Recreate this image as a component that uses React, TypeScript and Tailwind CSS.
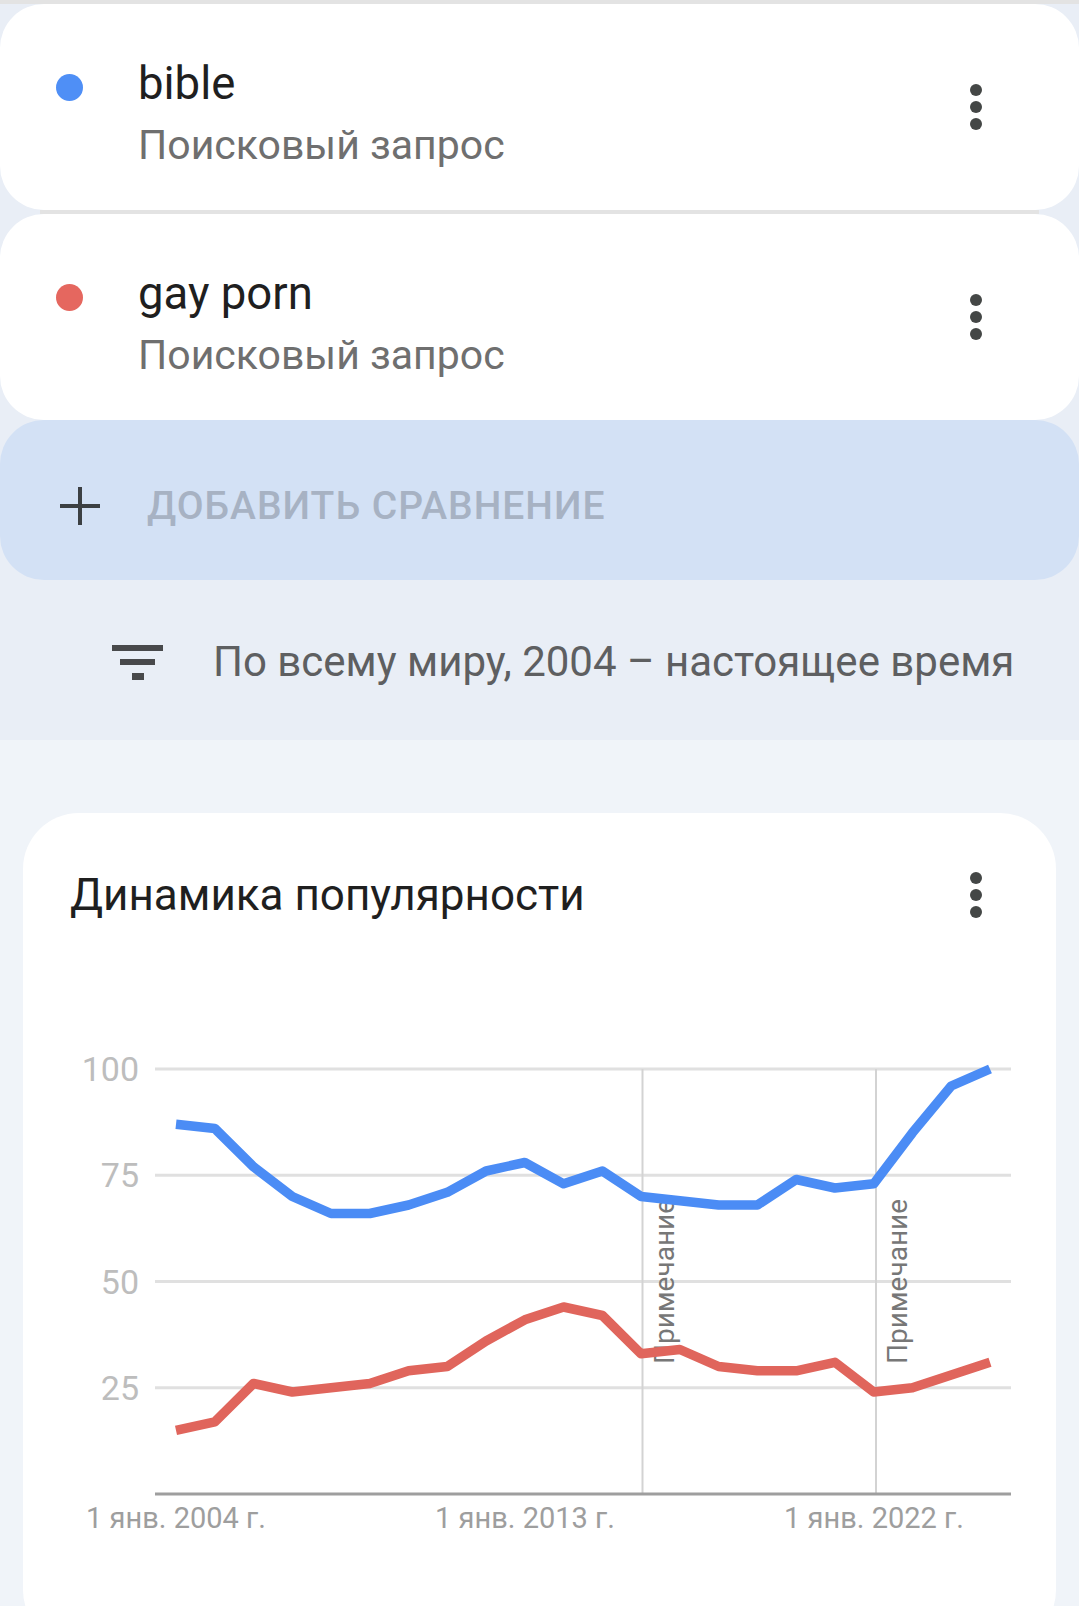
import React from "react";

const blue = [87, 86, 77, 70, 66, 66, 68, 71, 76, 78, 73, 76, 70, 69, 68, 68, 74, 72, 73, 85, 96, 100];
const red = [15, 17, 26, 24, 25, 26, 29, 30, 36, 41, 44, 42, 33, 34, 30, 29, 29, 31, 24, 25, 28, 31];

// chart geometry, in page pixels
const X0 = 176;
const STEP = 38.76;
const BASE = 1494;
const UNIT = 4.25;

const toPoints = (data: number[]) =>
  data.map((v, i) => `${(X0 + i * STEP).toFixed(1)},${(BASE - v * UNIT).toFixed(1)}`).join(" ");

function Kebab() {
  return (
    <div className="flex flex-col items-center gap-[5px]">
      <span className="h-3 w-3 rounded-full bg-[#444746]" />
      <span className="h-3 w-3 rounded-full bg-[#444746]" />
      <span className="h-3 w-3 rounded-full bg-[#444746]" />
    </div>
  );
}

function TermCard({ dot, title }: { dot: string; title: string }) {
  return (
    <div className="flex h-[206px] items-start rounded-[44px] bg-white pl-14 pr-[97px] pt-[54px]">
      <span className={`mt-4 h-[27px] w-[27px] shrink-0 rounded-full ${dot}`} />
      <div className="ml-[55px] flex-1">
        <div className="text-[45.5px] leading-[52px] text-[#1f1f1f]">{title}</div>
        <div className="mt-[11px] text-[41px] leading-[48px] text-[#6f6f6f]">Поисковый запрос</div>
      </div>
      <div className="mt-[26px]">
        <Kebab />
      </div>
    </div>
  );
}

export default function App() {
  const grid = [100, 75, 50, 25];
  const notes = [642.5, 876];

  return (
    <div className="h-[1606px] overflow-hidden bg-[#f0f4f9] font-['Roboto',sans-serif]">
      <div className="bg-[#e9eef6]">
        <div className="h-1 bg-[#e3e3e3]" />
        <TermCard dot="bg-[#4f8ff6]" title="bible" />
        <div className="mx-10 h-1 bg-[#e3e3e3]" />
        <TermCard dot="bg-[#e5675f]" title="gay porn" />

        {/* add comparison */}
        <div className="flex h-[160px] items-center rounded-[44px] bg-[#d3e1f5] pl-[60px] pt-3">
          <svg width="40" height="40" viewBox="0 0 40 40" className="shrink-0">
            <line x1="0" y1="20" x2="40" y2="20" stroke="#3c4043" strokeWidth="4" />
            <line x1="20" y1="1" x2="20" y2="39" stroke="#3c4043" strokeWidth="4" />
          </svg>
          <span className="ml-[47px] text-[39px] font-medium uppercase leading-none tracking-[1px] text-[#a7b2c3]">
            Добавить сравнение
          </span>
        </div>

        {/* filter row */}
        <div className="flex h-[160px] items-center pl-[112px] pt-1">
          <div className="flex w-[51px] shrink-0 flex-col items-center gap-2">
            <span className="h-1.5 w-[51px] bg-[#48494b]" />
            <span className="h-1.5 w-[35px] bg-[#48494b]" />
            <span className="h-[7px] w-3 bg-[#48494b]" />
          </div>
          <span className="ml-[50px] text-[42px] leading-none text-[#5e5f61]">
            По всему миру, 2004 – настоящее время
          </span>
        </div>
      </div>

      {/* chart card */}
      <div className="mx-[23px] mt-[73px] rounded-[56px] bg-white pb-24">
        <div className="flex items-center justify-between pl-[47px] pr-[74px] pt-14">
          <h2 className="text-[44px] leading-[52px] text-[#1f1f1f]">Динамика популярности</h2>
          <Kebab />
        </div>

        <svg className="mt-[109px] block" width="1033" height="520" viewBox="23 1030 1033 520">
          {grid.map((v) => {
            const y = BASE - v * UNIT;
            return (
              <g key={v}>
                <line x1="155" y1={y} x2="1011" y2={y} stroke="#e0e0e0" strokeWidth="3" />
                <text
                  x="139"
                  y={y + 12}
                  textAnchor="end"
                  fontSize="34"
                  fill="#bdbdbd"
                  fontFamily="Roboto, sans-serif"
                >
                  {v}
                </text>
              </g>
            );
          })}

          {notes.map((x) => (
            <g key={x}>
              <line x1={x} y1="1069" x2={x} y2={BASE} stroke="#d3d3d3" strokeWidth="2" />
              <text
                transform={`translate(${x + 31} 1364) rotate(-90)`}
                fontSize="28"
                fill="#777777"
                fontFamily="Roboto, sans-serif"
              >
                Примечание
              </text>
            </g>
          ))}

          <line x1="155" y1={BASE} x2="1011" y2={BASE} stroke="#9e9e9e" strokeWidth="3" />

          <polyline
            points={toPoints(blue)}
            fill="none"
            stroke="#4b8cf5"
            strokeWidth="9.5"
            strokeLinejoin="round"
          />
          <polyline
            points={toPoints(red)}
            fill="none"
            stroke="#e0655c"
            strokeWidth="9.5"
            strokeLinejoin="round"
          />

          {[
            { x: 176, t: "1 янв. 2004 г." },
            { x: 525, t: "1 янв. 2013 г." },
            { x: 874, t: "1 янв. 2022 г." },
          ].map((l) => (
            <text
              key={l.t}
              x={l.x}
              y="1528"
              textAnchor="middle"
              fontSize="29"
              fill="#9e9e9e"
              fontFamily="Roboto, sans-serif"
            >
              {l.t}
            </text>
          ))}
        </svg>
      </div>
    </div>
  );
}
